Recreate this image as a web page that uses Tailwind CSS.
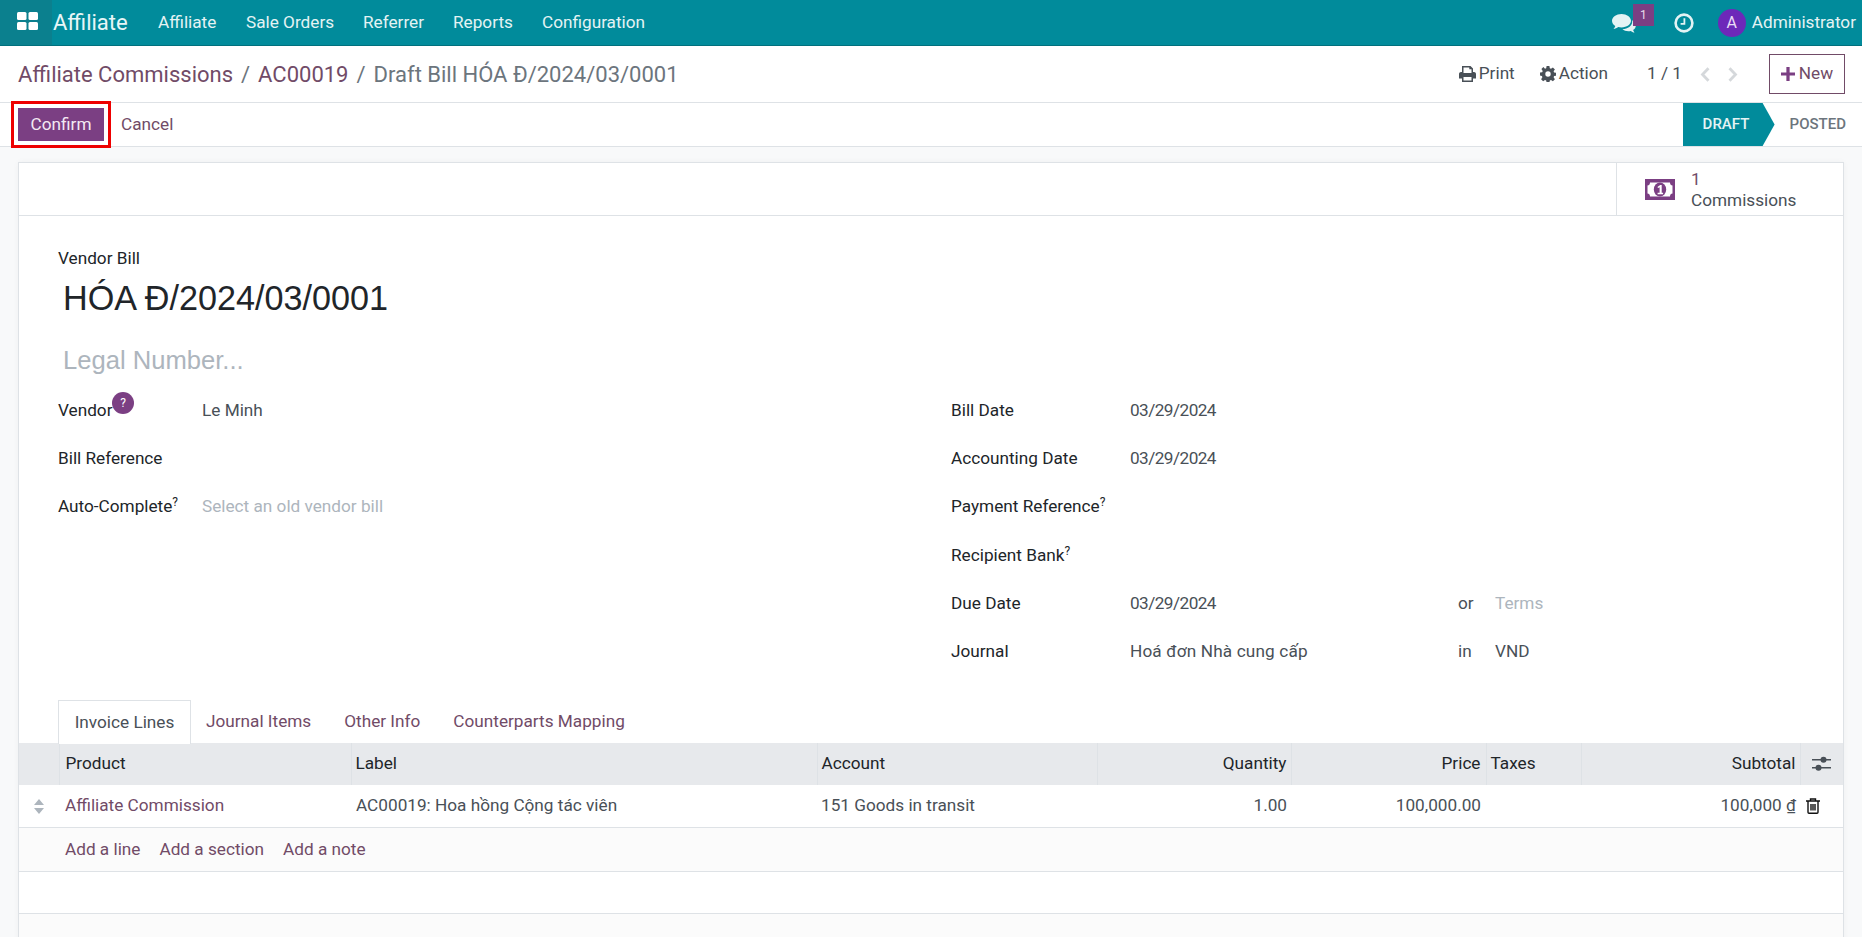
<!DOCTYPE html>
<html lang="en">
<head>
    <meta charset="UTF-8">
    <meta name="viewport" content="width=device-width, initial-scale=1.0">
    <title>Draft Bill</title>
    <script src="https://cdn.jsdelivr.net/npm/@tailwindcss/browser@4"></script>
</head>
<body class="h-[937px] overflow-hidden bg-[#f8f9fa] font-['Roboto',sans-serif] text-[17.2px] text-[#495057]">

<!-- Barra superior -->
<header class="flex h-[46px] items-center justify-between bg-[#018b9b] text-white border-b border-[#01707d]">
    <div class="flex h-full items-center">
        <div class="flex h-full w-[52px] items-center justify-center bg-[#0b808e] pl-[3px] pb-[3px]">
            <svg class="h-[18px] w-[21px]" viewBox="0 0 21 18" fill="#fff">
                <rect x="0" y="0" width="9.500" height="8" rx="1.500"/><rect x="11.500" y="0" width="9.500" height="8" rx="1.500"/>
                <rect x="0" y="10" width="9.500" height="8" rx="1.500"/><rect x="11.500" y="10" width="9.500" height="8" rx="1.500"/>
            </svg>
        </div>
        <a class="ml-[1px] w-[105px] text-[22px] text-[#e8f6f7]">Affiliate</a>
        <nav class="flex text-[#e4f3f4]">
            <a class="w-[88px]">Affiliate</a>
            <a class="w-[117px]">Sale Orders</a>
            <a class="w-[90px]">Referrer</a>
            <a class="w-[89px]">Reports</a>
            <a>Configuration</a>
        </nav>
    </div>
    <div class="flex h-full items-center pr-[6px] text-[#e4f3f4]">
        <div class="relative mr-[38px] h-full w-[24px]">
            <svg class="absolute left-0 top-[14px] h-[20px] w-[24px]" viewBox="0 0 24 20" fill="#e4f3f4">
                <path d="M9.500 0C4.300 0 0 3 0 6.800c0 2.100 1.300 4 3.300 5.200-.3 1-.9 2-1.800 2.900 1.800-.2 3.400-.9 4.700-1.900 1 .3 2.100.4 3.300.4 5.200 0 9.500-3 9.500-6.600S14.700 0 9.500 0z"/>
                <path d="M20 6.200c.2.500.2 1 .2 1.500 0 4-4.300 7.300-9.800 7.500 1.500 1.300 3.600 2 6 2 .8 0 1.600-.1 2.400-.3.900.8 2.200 1.400 3.700 1.600-.6-.8-1.100-1.600-1.400-2.500 1.600-1 2.700-2.600 2.700-4.300 0-2.300-1.500-4.200-3.800-5.500z"/>
            </svg>
            <span class="absolute left-[21px] top-[4px] flex h-[22px] w-[21px] items-center justify-center bg-[#7b3f83] text-[12px] leading-none text-[#e8dcea]">1</span>
        </div>
        <svg class="mr-[24px] h-[20px] w-[20px]" viewBox="0 0 20 20" fill="none" stroke="#e4f3f4">
            <circle cx="10" cy="10" r="8.400" stroke-width="2.600"/>
            <path d="M10.400 5.200V10.800H6.600" stroke-width="1.800"/>
        </svg>
        <span class="mr-[6px] flex h-[28px] w-[28px] items-center justify-center rounded-full bg-[#6d28b9] text-[16px] text-[#e9dcf6]">A</span>
        <span>Administrator</span>
    </div>
</header>

<!-- Migas de pan -->
<section class="flex h-[57px] items-center justify-between border-b border-[#dee2e6] bg-white pl-[18px] pr-[17px]">
    <div class="flex items-center text-[22px] text-[#6c757d]">
        <a class="text-[#714b67]">Affiliate Commissions</a>
        <span class="mx-[8px]">/</span>
        <a class="text-[#714b67]">AC00019</a>
        <span class="mx-[8px]">/</span>
        <span>Draft Bill HÓA Đ/2024/03/0001</span>
    </div>
    <div class="flex items-center">
        <svg class="mr-[3px] h-[16px] w-[17px]" viewBox="0 0 17 16" fill="#495057">
            <path d="M3 0h8.500L14 2.500V6h1c1.100 0 2 .9 2 2v4.500h-3V16H3v-3.500H0V8c0-1.100.9-2 2-2h1V0zm1.500 1.500V7h8V3.200H10.300V1.500H4.500zm0 9.500v3.500h8V11h-8z" fill-rule="evenodd"/>
        </svg>
        <span class="mr-[25px]">Print</span>
        <svg class="mr-[3px] h-[16px] w-[16px]" viewBox="0 0 16 16" fill="#495057">
            <path d="M6.600 0h2.800l.4 2.200 1.200.5L12.900 1.400l2 2-1.300 1.900.5 1.200 2.200.4v2.800l-2.200.4-.5 1.200 1.300 1.900-2 2-1.900-1.300-1.200.5-.4 2.200H6.600l-.4-2.200-1.200-.5-1.900 1.300-2-2 1.300-1.900-.5-1.200L0 9.400V6.600l2.200-.4.5-1.200L1.400 3.100l2-2L5 2.700l1.200-.5L6.600 0zM8 5.300a2.700 2.700 0 100 5.400 2.700 2.700 0 000-5.400z" fill-rule="evenodd"/>
        </svg>
        <span class="mr-[39px]">Action</span>
        <span class="mr-[18px]">1 / 1</span>
        <svg class="mr-[18px] h-[15px] w-[10px]" viewBox="0 0 10 15" fill="none" stroke="#d5d8db" stroke-width="2.800"><path d="M8.500 1.200 2.500 7.500l6 6.300"/></svg>
        <svg class="mr-[31px] h-[15px] w-[10px]" viewBox="0 0 10 15" fill="none" stroke="#d5d8db" stroke-width="2.800"><path d="M1.500 1.200 7.500 7.500l-6 6.300"/></svg>
        <button class="flex h-[40px] w-[76px] items-center justify-center gap-[4px] border border-[#714b67] text-[#714b67]">
            <svg class="h-[14px] w-[14px]" viewBox="0 0 13 13" fill="#7b3f83"><path d="M5 0h3v5h5v3H8v5H5V8H0V5h5z"/></svg>
            <span>New</span>
        </button>
    </div>
</section>

<!-- Botones y estado -->
<section class="relative flex h-[44px] items-center justify-between border-b border-[#dee2e6] bg-white pl-[18px]">
    <div class="flex items-center">
        <button class="h-[33px] w-[86px] bg-[#7b3f83] text-center text-[#f3e9f3] outline-[3px] outline-[#ee0000] outline-offset-[4px]">Confirm</button>
        <a class="ml-[17px] text-[#714b67]">Cancel</a>
    </div>
    <div class="flex h-full items-center">
        <div class="flex h-full w-[92px] items-center bg-[#018b9b] pl-[20px] text-[15px] font-medium uppercase text-[#e4f3f4] [clip-path:polygon(0_0,80px_0,100%_50%,80px_100%,0_100%)]">Draft</div>
        <div class="ml-[15px] pr-[16px] text-[15px] font-medium uppercase text-[#6c757d]">Posted</div>
    </div>
</section>

<!-- Tarjeta del formulario -->
<main class="mx-[18px] mt-[15px] h-[800px] border border-[#dee2e6] bg-white shadow-[0_0_6px_rgba(0,0,0,0.04)]">
    <div class="flex h-[53px] justify-end border-b border-[#dee2e6]">
        <div class="flex w-[227px] items-center border-l border-[#dee2e6] pl-[28px]">
            <svg class="mr-[16px] h-[21px] w-[30px]" viewBox="0 0 30 21">
                <path fill="#7b3f83" fill-rule="evenodd" d="M0 0h30v21H0zM5 3.500c0 1.700-1 3-2.500 3v8c1.500 0 2.500 1.300 2.500 3h20c0-1.700 1-3 2.500-3v-8c-1.500 0-2.500-1.300-2.500-3z"/>
                <ellipse cx="15" cy="10.500" rx="6.200" ry="7" fill="#7b3f83"/>
                <path fill="#fff" d="M15.200 6h1.500v7.800h1.400v1.400h-5.500v-1.400h2V8.200l-1.500.9-.7-1.200z"/>
            </svg>
            <div class="pt-[1px] leading-[21px]">
                <div class="text-[#714b67]">1</div>
                <div>Commissions</div>
            </div>
        </div>
    </div>

    <div class="px-[39px]">
        <div class="mt-[30px] text-[#212529]">Vendor Bill</div>
        <div class="ml-[5px] mt-[1px] font-['Liberation_Sans',sans-serif] text-[34.2px] leading-[50px] text-[#212529]">HÓA Đ/2024/03/0001</div>
        <div class="ml-[5px] mt-[17px] font-['Liberation_Sans',sans-serif] text-[25.6px] leading-[40px] text-[#adb5bd]">Legal Number...</div>

        <div class="mt-[7px] grid grid-cols-[893px_1fr]">
            <div class="flex flex-col">
                <div class="flex h-[48.200px] items-center">
                    <div class="relative w-[144px] text-[#212529]">Vendor<span class="absolute left-[54px] top-[-6px] flex h-[22px] w-[22px] items-center justify-center rounded-full bg-[#7b3f83] text-[12px] text-white">?</span></div>
                    <div>Le Minh</div>
                </div>
                <div class="flex h-[48.200px] items-center">
                    <div class="w-[144px] text-[#212529]">Bill Reference</div>
                </div>
                <div class="flex h-[48.200px] items-center">
                    <div class="w-[144px] text-[#212529]">Auto-Complete<sup class="text-[12px]">?</sup></div>
                    <div class="text-[#adb5bd]">Select an old vendor bill</div>
                </div>
            </div>
            <div class="flex flex-col">
                <div class="flex h-[48.200px] items-center">
                    <div class="w-[179px] text-[#212529]">Bill Date</div>
                    <div class="tracking-[-0.55px]">03/29/2024</div>
                </div>
                <div class="flex h-[48.200px] items-center">
                    <div class="w-[179px] text-[#212529]">Accounting Date</div>
                    <div class="tracking-[-0.55px]">03/29/2024</div>
                </div>
                <div class="flex h-[48.200px] items-center">
                    <div class="w-[179px] text-[#212529]">Payment Reference<sup class="text-[12px]">?</sup></div>
                </div>
                <div class="flex h-[48.200px] items-center">
                    <div class="w-[179px] text-[#212529]">Recipient Bank<sup class="text-[12px]">?</sup></div>
                </div>
                <div class="flex h-[48.200px] items-center">
                    <div class="w-[179px] text-[#212529]">Due Date</div>
                    <div class="w-[328px] tracking-[-0.55px]">03/29/2024</div>
                    <div class="w-[37px]">or</div>
                    <div class="text-[#adb5bd]">Terms</div>
                </div>
                <div class="flex h-[48.200px] items-center">
                    <div class="w-[179px] text-[#212529]">Journal</div>
                    <div class="w-[328px] tracking-[0.15px]">Hoá đơn Nhà cung cấp</div>
                    <div class="w-[37px]">in</div>
                    <div>VND</div>
                </div>
            </div>
        </div>
    </div>

    <!-- Pestañas -->
    <div class="mt-[24px] flex h-[43px] pl-[39px] text-[#714b67]">
        <div class="mb-[-1px] flex w-[133px] items-center justify-center border border-b-0 border-[#dee2e6] bg-white text-[#495057]">Invoice Lines</div>
        <div class="flex items-center pl-[15px] pr-[16px]">Journal Items</div>
        <div class="flex items-center px-[17px]">Other Info</div>
        <div class="flex items-center px-[16px]">Counterparts Mapping</div>
    </div>

    <!-- Tabla de lineas -->
    <table class="w-full table-fixed border-collapse">
        <thead class="bg-[#e7e9ec] text-[#212529]">
            <tr class="h-[42px] font-normal">
                <th class="w-[40px]"></th>
                <th class="w-[292px] border-l border-[#dee2e6] px-[6px] text-left font-normal">Product</th>
                <th class="w-[466px] border-l border-[#dee2e6] px-[4px] text-left font-normal">Label</th>
                <th class="w-[280px] border-l border-[#dee2e6] px-[4px] text-left font-normal">Account</th>
                <th class="w-[194px] border-l border-[#dee2e6] px-[4px] text-right font-normal">Quantity</th>
                <th class="w-[195px] border-l border-[#dee2e6] px-[5px] text-right font-normal">Price</th>
                <th class="w-[95px] border-l border-[#dee2e6] px-[4px] text-left font-normal">Taxes</th>
                <th class="w-[219px] border-l border-[#dee2e6] px-[4px] text-right font-normal">Subtotal</th>
                <th class="border-l border-[#dee2e6]">
                    <svg class="mx-auto block h-[16px] w-[19px]" viewBox="0 0 19 16" fill="#495057">
                        <rect x="0" y="3" width="19" height="1.500"/><rect x="0" y="11" width="19" height="1.500"/>
                        <circle cx="11.500" cy="3.800" r="3"/><circle cx="6.500" cy="11.800" r="3"/>
                    </svg>
                </th>
            </tr>
        </thead>
        <tbody>
            <tr class="h-[43px] border-b border-[#dee2e6]">
                <td>
                    <svg class="mx-auto block h-[15px] w-[10px]" viewBox="0 0 10 15" fill="#adb5bd"><path d="M5 0l5 6H0zM5 15l5-6H0z"/></svg>
                </td>
                <td class="px-[6px] text-[#714b67]">Affiliate Commission</td>
                <td class="px-[5px]">AC00019: Hoa hồng Cộng tác viên</td>
                <td class="px-[4px]">151 Goods in transit</td>
                <td class="px-[4px] text-right">1.00</td>
                <td class="px-[5px] text-right">100,000.00</td>
                <td></td>
                <td class="px-[4px] text-right">100,000 ₫</td>
                <td class="pl-[6px]">
                    <svg class="h-[16px] w-[14px]" viewBox="0 0 14 16" fill="none" stroke="#111" stroke-width="1.400">
                        <path d="M0 3h14M4.500 3V1h5v2M2 3v11.200c0 .6.400 1 1 1h8c.6 0 1-.4 1-1V3"/>
                        <path d="M5 6v6.500M7 6v6.500M9 6v6.500"/>
                    </svg>
                </td>
            </tr>
            <tr class="h-[44px] border-b border-[#dee2e6] bg-[#fbfbfb]">
                <td></td>
                <td colspan="8" class="px-[6px] text-[#714b67]">
                    <a class="mr-[19px]">Add a line</a><a class="mr-[19px]">Add a section</a><a>Add a note</a>
                </td>
            </tr>
            <tr class="h-[42px] border-b border-[#dee2e6]"><td colspan="9"></td></tr>
        </tbody>
    </table>
    <div class="h-[60px] bg-[#fbfbfb]"></div>
</main>
</body>
</html>
